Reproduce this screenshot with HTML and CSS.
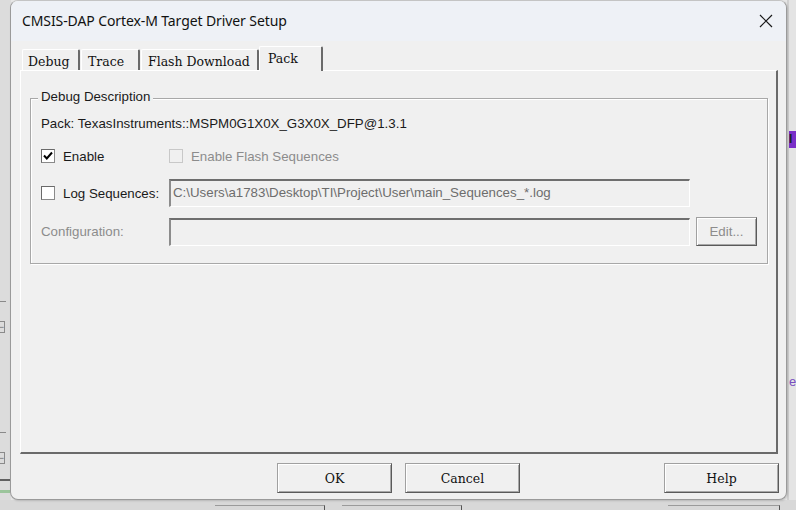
FILE: index.html
```html
<!DOCTYPE html>
<html>
<head>
<meta charset="utf-8">
<title>CMSIS-DAP Cortex-M Target Driver Setup</title>
<link rel="stylesheet" href="styles.css">
</head>
<body>
<div class="desktop">
  <div class="bg-left">
    <div class="bg-line l1"></div>
    <div class="bg-box b1">−</div>
    <div class="bg-line l2"></div>
    <div class="bg-box b2">−</div>
    <div class="bg-line l3"></div>
    <div class="bg-green"></div>
  </div>
  <div class="bg-right">
    <div class="bg-purple">I</div>
    <div class="bg-e">e</div>
  </div>
  <div class="bg-bottom">
    <div class="bg-btn k1"></div>
    <div class="bg-btn k2"></div>
    <div class="bg-btn k3"></div>
  </div>

  <div class="window">
    <div class="titlebar">
      <span class="title">CMSIS-DAP Cortex-M Target Driver Setup</span>
      <svg class="close" width="14" height="14" viewBox="0 0 14 14"><path d="M1 1 L13 13 M13 1 L1 13" stroke="#1a1a1a" stroke-width="1.2" fill="none"/></svg>
    </div>
    <div class="client">
      <div class="tabs">
        <div class="tab t1">Debug</div>
        <div class="tab t2">Trace</div>
        <div class="tab t3">Flash Download</div>
        <div class="tab active">Pack</div>
      </div>
      <div class="panel">
        <div class="group">
          <div class="legend">Debug Description</div>
          <div class="pack">Pack: TexasInstruments::MSPM0G1X0X_G3X0X_DFP@1.3.1</div>
          <div class="row row-enable">
            <div class="chk lblcol">
              <span class="box"><svg width="10" height="10" viewBox="0 0 10 10"><path d="M1 4.5 L3.8 7.5 L9 1.5" stroke="#000" stroke-width="2" fill="none"/></svg></span>
              <span>Enable</span>
            </div>
            <div class="chk disabled">
              <span class="box"></span>
              <span>Enable Flash Sequences</span>
            </div>
          </div>
          <div class="row row-log">
            <div class="chk lblcol">
              <span class="box"></span>
              <span>Log Sequences:</span>
            </div>
            <div class="field">C:\Users\a1783\Desktop\TI\Project\User\main_Sequences_*.log</div>
          </div>
          <div class="row row-cfg">
            <div class="lblcol disabled">Configuration:</div>
            <div class="field"></div>
            <div class="btn edit">Edit...</div>
          </div>
        </div>
      </div>
      <div class="buttons">
        <div class="btn mono ok">OK</div>
        <div class="btn mono cancel">Cancel</div>
        <div class="spacer"></div>
        <div class="btn mono help">Help</div>
      </div>
    </div>
  </div>
</div>
</body>
</html>
```

FILE: styles.css
```css
* { box-sizing: border-box; }
html, body { margin: 0; padding: 0; }
body {
  width: 796px;
  height: 510px;
  overflow: hidden;
  font-family: "Liberation Sans", Arial, sans-serif;
}
.desktop {
  position: relative;
  width: 796px;
  height: 510px;
  background: #e6e6e6;
  padding: 0 0 0 10px;
}

/* background fragments behind dialog */
.bg-left {
  position: absolute; left: 0; top: 0; width: 11px; height: 510px;
  background: #dcdcdc;
}
.bg-line { position: absolute; left: 0; width: 6px; height: 1px; background: #8a8a8a; }
.l1 { top: 301px; }
.l2 { top: 432px; }
.l3 { top: 479px; height: 2px; background: #606060; width: 10px; }
.bg-green { position: absolute; left: 0; top: 490px; width: 10px; height: 3px; background: #9cc59c; }
.bg-box {
  position: absolute; left: -5px; width: 10px; height: 12px;
  border: 1px solid #8a8a8a; font-size: 9px; line-height: 10px; text-align: right; color: #666;
}
.b1 { top: 321px; }
.b2 { top: 452px; }
.bg-right {
  position: absolute; right: 0; top: 0; width: 9px; height: 510px;
  background: #e4e4e4;
  border-left: 2px solid #d0d0d0;
}
.bg-purple {
  position: absolute; left: 0; top: 131px; width: 8px; height: 17px;
  background: #7a2fc8; color: #222; font-size: 12px; font-weight: bold; line-height: 17px;
}
.bg-e { position: absolute; left: 0; top: 374px; color: #7a4fc0; font-size: 13px; }
.bg-bottom { position: absolute; left: 0; bottom: 0; width: 796px; height: 10px; background: #d8d8d8; }
.bg-btn { position: absolute; top: 5px; height: 6px; border-top: 1px solid #9a9a9a; border-right: 1px solid #555; }
.k1 { left: 215px; width: 110px; }
.k2 { left: 342px; width: 120px; }
.k3 { left: 668px; width: 112px; }

/* window */
.window {
  position: relative;
  width: 777px;
  height: 500px;
  border: 1px solid #9a9a9a;
  border-top-color: #c4c4c4;
  border-radius: 8px;
  background: #f0f0f0;
  overflow: hidden;
  display: flex;
  flex-direction: column;
  box-shadow: 1px 1px 2px rgba(0,0,0,0.15);
}
.titlebar {
  height: 40px;
  flex: none;
  background: #eef1f6;
  display: flex;
  align-items: center;
  padding: 0 12px 0 11px;
}
.title {
  font-family: "Noto Sans", "Open Sans", sans-serif;
  font-size: 14px;
  color: #111;
  flex: 1;
  letter-spacing: -0.1px;
  margin-top: -2px;
}
.close { flex: none; margin-right: 1px; margin-top: -1px; }

.client {
  flex: 1;
  display: flex;
  flex-direction: column;
  padding: 4px 8px 0 9px;
}

/* tabs */
.tabs {
  display: flex;
  align-items: flex-end;
  height: 25px;
  padding-left: 2px;
  position: relative;
  z-index: 2;
}
.tab {
  font-family: "DejaVu Serif", "Liberation Serif", serif;
  font-size: 12.5px;
  color: #111;
  white-space: nowrap;
  height: 21px;
  line-height: 21px;
  padding: 1px 0 0 5px;
  border: 1px solid #fff;
  border-bottom: none;
  border-right: 2px solid #6a6a6a;
  border-radius: 2px 2px 0 0;
  margin-right: 1px;
  background: #f0f0f0;
}
.t1 { width: 58px; }
.t2 { width: 59px; padding-left: 6px; }
.t3 { width: 118px; padding-left: 6px; margin-right: 0; }
.tab.active {
  width: 64px;
  height: 25px;
  line-height: 20px;
  margin-bottom: -1px;
  padding: 2px 0 0 8px;
  background: #f0f0f0;
}

.panel {
  height: 384px;
  flex: none;
  border: 1px solid #fff;
  border-right: 2px solid #6a6a6a;
  border-bottom: 2px solid #6a6a6a;
  padding: 27px 8px 0 9px;
}

/* group box */
.group {
  position: relative;
  height: 166px;
  border: 1px solid #a8a8a8;
  box-shadow: 1px 1px 0 #fff, inset 1px 1px 0 #fff;
  padding: 15px 10px 0 10px;
  font-size: 13.3px;
  color: #1a1a1a;
}
.legend {
  position: absolute;
  top: -10px;
  left: 7px;
  padding: 0 3px;
  background: #f0f0f0;
  line-height: 16px;
}
.pack { line-height: 20px; height: 20px; }
.row { display: flex; align-items: center; }
.row-enable { height: 26px; margin-top: 9px; }
.chk { display: flex; align-items: center; }
.box {
  width: 14px; height: 14px;
  background: #fff;
  border: 1px solid #8a8a8a;
  border-top-color: #6a6a6a;
  border-left-color: #6a6a6a;
  margin-right: 8px;
  display: flex; align-items: center; justify-content: center;
}
.disabled { color: #8c8c8c; }
.disabled .box { background: #f0f0f0; border-color: #c8c8c8; }
.lblcol { width: 128px; flex: none; }
.row-log { height: 28px; margin-top: 10px; }
.row-cfg { height: 29px; margin-top: 10px; }
.field {
  width: 521px;
  height: 28px;
  flex: none;
  border: 2px solid #8c8c8c;
  border-right: 1px solid #fff;
  border-bottom: 1px solid #fff;
  border-top-color: #6e6e6e;
  border-left-color: #8c8c8c;
  background: #f0f0f0;
  color: #6d6d6d;
  line-height: 24px;
  padding-left: 2px;
  white-space: nowrap;
  overflow: hidden;
}
.btn {
  display: flex; align-items: center; justify-content: center;
  border: 1px solid #a0a0a0;
  border-right-color: #5a5a5a;
  border-bottom-color: #5a5a5a;
  box-shadow: inset 1px 1px 0 #fff, inset -1px -1px 0 #a8a8a8;
  background: #f0f0f0;
}
.edit {
  width: 63px; height: 29px; margin-left: 6px;
  color: #8c8c8c;
}

/* bottom buttons */
.buttons {
  display: flex;
  padding: 9px 0 0 257px;
}
.mono {
  font-family: "DejaVu Serif", "Liberation Serif", serif;
  font-size: 12.5px;
  color: #111;
  height: 30px;
  width: 115px;
}
.cancel { margin-left: 13px; }
.spacer { flex: 1; }
.help { margin-right: -1px; }
```
